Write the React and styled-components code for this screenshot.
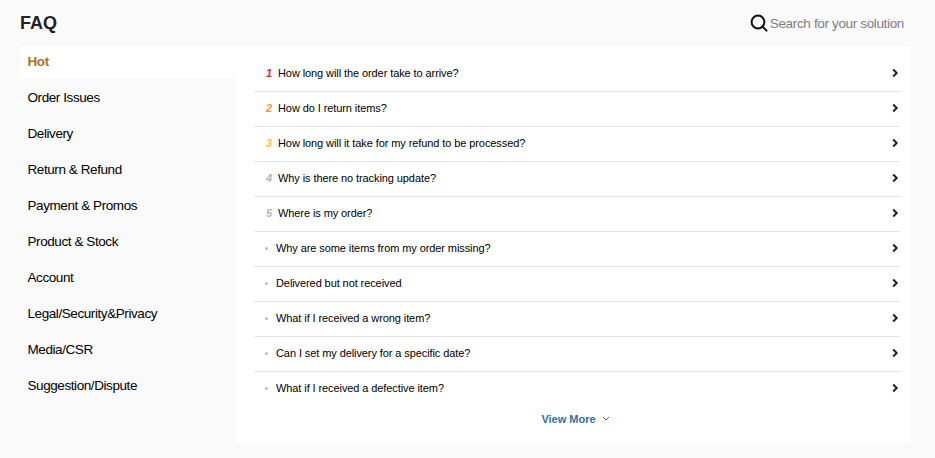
import React from 'react';
import styled, { createGlobalStyle } from 'styled-components';

const GlobalStyle = createGlobalStyle`
  html, body {
    margin: 0;
    padding: 0;
    background: #fafafa;
    font-family: "Liberation Sans", Arial, sans-serif;
  }
`;

const Page = styled.div`
  width: 935px;
  height: 458px;
  padding: 0 24px 15px 20px;
  box-sizing: border-box;
  overflow: hidden;
`;

const Header = styled.header`
  height: 46px;
  display: flex;
  align-items: center;
  justify-content: space-between;
  padding-right: 7px;
`;

const Title = styled.h1`
  margin: 0;
  font-size: 18px;
  font-weight: 700;
  color: #222222;
`;

const Search = styled.div`
  display: flex;
  align-items: center;
  gap: 2px;
  font-size: 13.5px;
  letter-spacing: -0.35px;
  color: #808080;
`;

const Body = styled.div`
  display: flex;
  height: 397px;
`;

const Sidebar = styled.nav`
  width: 216px;
  display: flex;
  flex-direction: column;
  gap: 4px;
`;

const NavItem = styled.div`
  height: 32px;
  line-height: 31px;
  padding-left: 7.5px;
  font-size: 13.5px;
  letter-spacing: -0.42px;
  font-weight: ${(p) => (p.$active ? 700 : 400)};
  color: ${(p) => (p.$active ? '#a8741a' : '#000000')};
  background: ${(p) => (p.$active ? '#ffffff' : 'transparent')};
`;

const Panel = styled.main`
  flex: 1;
  background: #ffffff;
  padding: 11px 11px 0 18px;
`;

const Row = styled.div`
  height: 35px;
  box-sizing: border-box;
  padding-bottom: 2px;
  display: flex;
  align-items: center;
  border-bottom: 1px solid ${(p) => (p.$last ? 'transparent' : '#e5e5e5')};
  font-size: 11px;
  letter-spacing: -0.09px;
  color: #000000;
`;

const Rank = styled.span`
  width: 24px;
  padding-left: 12px;
  box-sizing: border-box;
  font-size: 11px;
  font-weight: 700;
  font-style: italic;
  color: ${(p) => p.$color};
`;

const Dot = styled.span`
  width: 3px;
  height: 3px;
  margin: 0 8px 0 11px;
  border-radius: 50%;
  background: #bbbbbb;
`;

const Question = styled.span`
  flex: 1;
`;

const ViewMore = styled.div`
  height: 24px;
  display: flex;
  align-items: center;
  justify-content: center;
  gap: 6px;
  padding-right: 3px;
  font-size: 11px;
  font-weight: 700;
  color: #2f6ea5;
`;

const SearchIcon = () => (
  <svg width="18" height="18" viewBox="0 0 18 18" fill="none" stroke="#111111" strokeWidth="2">
    <circle cx="8" cy="8" r="6.4" />
    <path d="M12.6 12.6 L16.6 16.6" strokeLinecap="round" />
  </svg>
);

const Chevron = () => (
  <svg width="8" height="10" viewBox="0 0 8 10" fill="none" stroke="#222222" strokeWidth="2">
    <path d="M1.2 1.5 L4.7 5 L1.2 8.5" />
  </svg>
);

const ChevronDown = () => (
  <svg width="8" height="6" viewBox="0 0 8 6" fill="none" stroke="#2f6ea5" strokeWidth="1">
    <path d="M1 1 L4 4 L7 1" />
  </svg>
);

const categories = [
  'Hot',
  'Order Issues',
  'Delivery',
  'Return & Refund',
  'Payment & Promos',
  'Product & Stock',
  'Account',
  'Legal/Security&Privacy',
  'Media/CSR',
  'Suggestion/Dispute',
];

const rankColors = ['#ff1a2a', '#f59342', '#fac832', '#b4b4b4', '#b4b4b4'];

const questions = [
  'How long will the order take to arrive?',
  'How do I return items?',
  'How long will it take for my refund to be processed?',
  'Why is there no tracking update?',
  'Where is my order?',
  'Why are some items from my order missing?',
  'Delivered but not received',
  'What if I received a wrong item?',
  'Can I set my delivery for a specific date?',
  'What if I received a defective item?',
];

const App = () => (
  <Page>
    <GlobalStyle />
    <Header>
      <Title>FAQ</Title>
      <Search>
        <SearchIcon />
        Search for your solution
      </Search>
    </Header>
    <Body>
      <Sidebar>
        {categories.map((c, i) => (
          <NavItem key={c} $active={i === 0}>{c}</NavItem>
        ))}
      </Sidebar>
      <Panel>
        {questions.map((q, i) => (
          <Row key={q} $last={i === questions.length - 1}>
            {i < 5 ? <Rank $color={rankColors[i]}>{i + 1}</Rank> : <Dot />}
            <Question>{q}</Question>
            <Chevron />
          </Row>
        ))}
        <ViewMore>
          View More
          <ChevronDown />
        </ViewMore>
      </Panel>
    </Body>
  </Page>
);

export default App;
